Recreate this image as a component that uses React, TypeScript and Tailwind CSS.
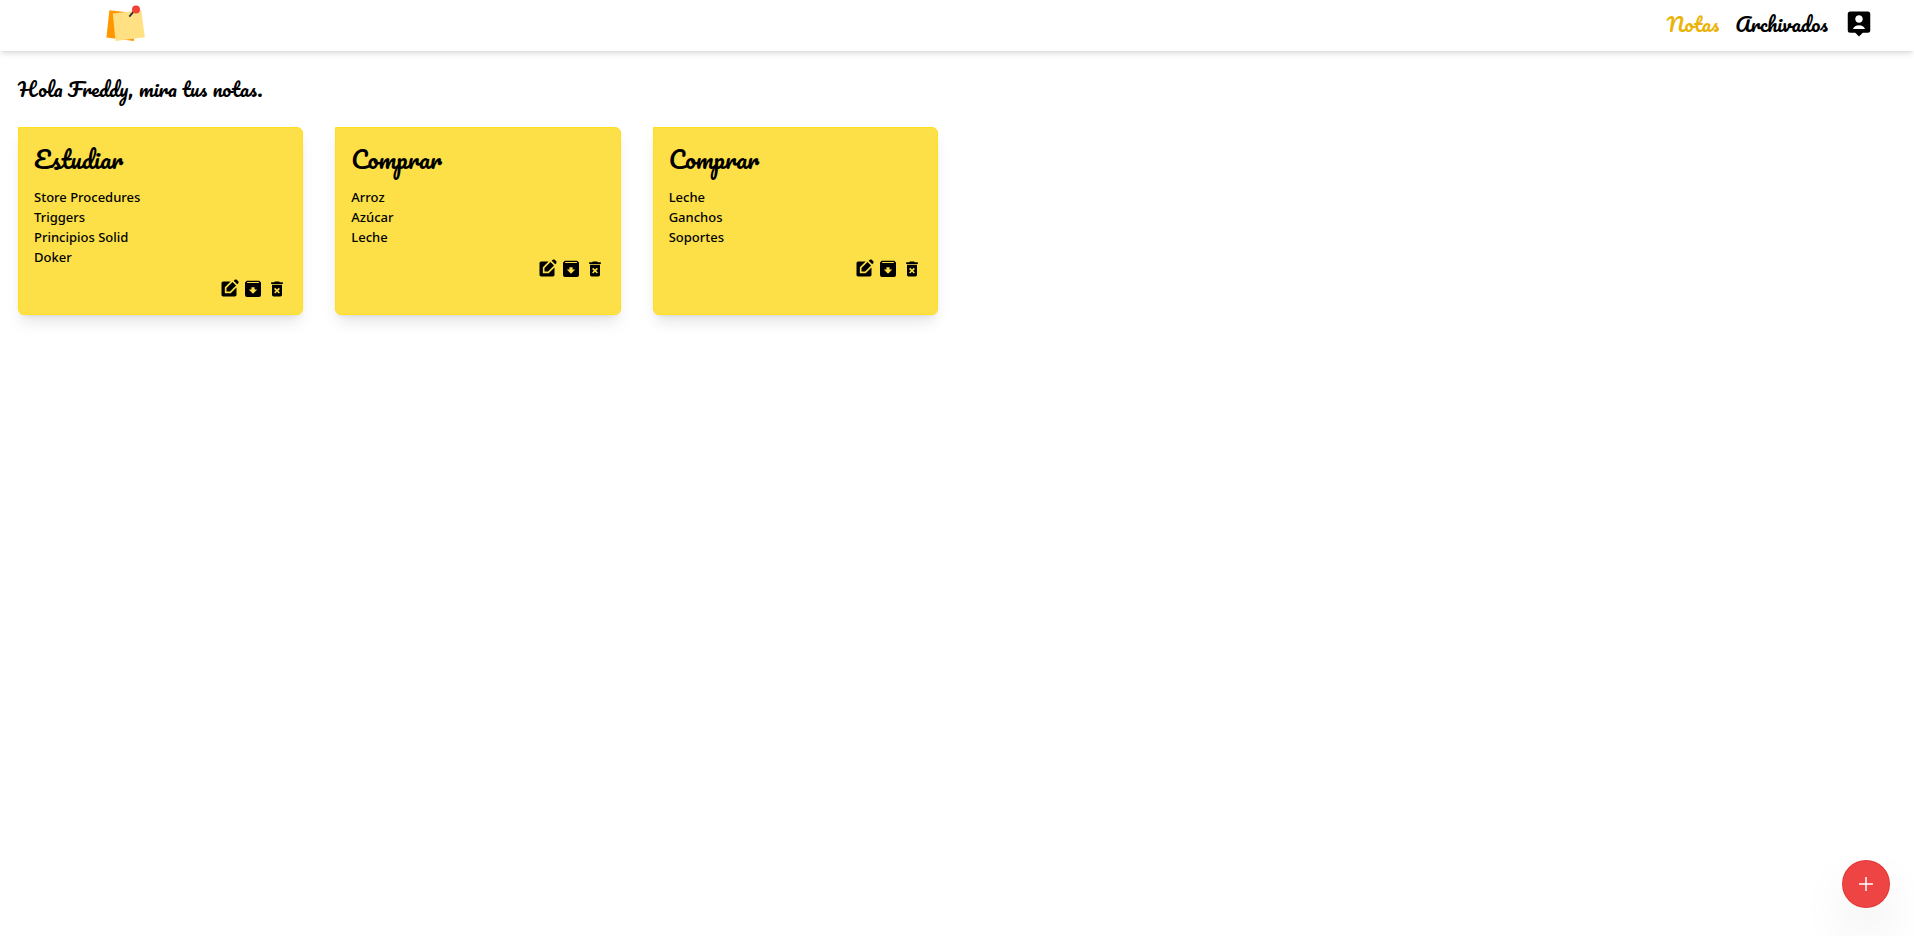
import { BiSolidUserPin } from "react-icons/bi";
import { MdDeleteForever, MdEditSquare } from "react-icons/md";

type Note = { id: number; title: string; lines: string[] };

const notes: Note[] = [
  { id: 1, title: "Estudiar", lines: ["Store Procedures", "Triggers", "Principios Solid", "Doker"] },
  { id: 2, title: "Comprar", lines: ["Arroz", "Azúcar", "Leche"] },
  { id: 3, title: "Comprar", lines: ["Leche", "Ganchos", "Soportes"] },
];

function Logo() {
  return (
    <svg viewBox="0 0 40 42" className="h-[42px] w-10" aria-hidden="true">
      <path d="M3.400 10.300 28 13v28L.400 37.500z" fill="#ff9800" />
      <path d="M6.800 13.500 35.200 10.200 38.800 37.300 9.500 41z" fill="#ffe082" />
      <path d="m23.300 16.600 4.500-5.200" stroke="#263238" strokeWidth="1.800" />
      <circle cx="30" cy="9.500" r="4" fill="#f44336" />
    </svg>
  );
}

function ArchiveIcon() {
  return (
    <svg viewBox="0 0 20 20" className="size-5" aria-hidden="true">
      <path
        fillRule="evenodd"
        fill="currentColor"
        d="M3.800 1.700h12.400l1.800 1.800v12.500a2 2 0 0 1-2 2H4a2 2 0 0 1-2-2V3.500zM4.400 3 3.800 4h12.400l-.600-1zM8.400 8.300v2.200H5.800L10 14.800l4.200-4.300h-2.600V8.300z"
      />
    </svg>
  );
}

function NoteCard({ note }: { note: Note }) {
  return (
    <article className="rounded-md rounded-tl-none border border-[#ffe01c] bg-[#fde047] p-[15px] shadow-lg">
      <h2 className="mb-3 font-['Pacifico',cursive] text-2xl leading-8">{note.title}</h2>
      <ul className="text-[13px] leading-5 font-medium">
        {note.lines.map((line) => (
          <li key={line}>{line}</li>
        ))}
      </ul>
      <div className="mt-3 flex justify-end gap-1">
        <button type="button" aria-label="Editar">
          <MdEditSquare className="size-5" />
        </button>
        <button type="button" aria-label="Archivar">
          <ArchiveIcon />
        </button>
        <button type="button" aria-label="Eliminar">
          <MdDeleteForever className="size-5" />
        </button>
      </div>
    </article>
  );
}

export default function App() {
  return (
    <div className="min-h-screen bg-white font-['Noto_Sans',sans-serif] text-black">
      <header className="flex items-start justify-between bg-white pr-10 pl-[106px] shadow-md">
        <a href="#" aria-label="Inicio">
          <Logo />
        </a>
        <nav className="flex items-center gap-4 pt-2 pb-3 font-['Pacifico',cursive] text-xl leading-[31px]">
          <a href="#notas" className="text-[#eab308]">Notas</a>
          <a href="#archivados">Archivados</a>
          <button type="button" aria-label="Perfil">
            <BiSolidUserPin className="size-[30px]" />
          </button>
        </nav>
      </header>
      <main className="pt-5 pr-6 pl-[18px]">
        <h1 className="mb-5 font-['Pacifico',cursive] text-xl leading-9">
          Hola Freddy, mira tus notas.
        </h1>
        <section className="grid grid-cols-1 gap-8 sm:grid-cols-2 lg:grid-cols-4 xl:grid-cols-6">
          {notes.map((note) => (
            <NoteCard key={note.id} note={note} />
          ))}
        </section>
      </main>
      <button
        type="button"
        aria-label="Agregar nota"
        className="fixed right-6 bottom-7 flex size-12 items-center justify-center rounded-full border border-[#dc2626]/50 bg-[#ef4444] text-white shadow-2xl"
      >
        <svg viewBox="0 0 14 14" className="size-[14px]" aria-hidden="true">
          <path d="M7 0v14M0 7h14" stroke="currentColor" strokeWidth="1.500" />
        </svg>
      </button>
    </div>
  );
}
